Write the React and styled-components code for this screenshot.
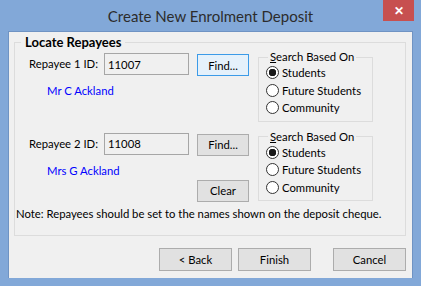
import styled, { createGlobalStyle } from "styled-components";

const GlobalStyle = createGlobalStyle`
  body {
    margin: 0;
    background: #ffffff;
    font-family: Lato, "Noto Sans", sans-serif;
  }
`;

const Window = styled.div`
  width: 421px;
  height: 286px;
  box-sizing: border-box;
  background: #82a8d8;
  padding: 0 8px 8px 8px;
  display: flex;
  flex-direction: column;
`;

const TitleBar = styled.div`
  height: 31px;
  display: grid;
  grid-template-columns: 1fr auto 1fr;
  align-items: center;
`;

const Title = styled.div`
  grid-column: 2;
  font-size: 15px;
  color: #2c2c2c;
  padding-top: 1px;
`;

const CloseButton = styled.div`
  grid-column: 3;
  justify-self: end;
  align-self: start;
  width: 31px;
  height: 21px;
  margin-right: -1px;
  background: #c75050;
  color: #ffffff;
  font-size: 12px;
  font-weight: bold;
  display: flex;
  align-items: center;
  justify-content: center;
`;

const Client = styled.div`
  flex: 1;
  background: #f0f0f0;
  box-sizing: border-box;
  border: 1px solid #6f93c3;
  border-bottom: none;
  padding-top: 3px;
  display: flex;
  flex-direction: column;
  font-size: 11.3px;
  color: #000000;
  white-space: nowrap;
`;

const GroupBox = styled.fieldset`
  margin: 0 6px 0 5px;
  padding: 0 0 14px 0;
  border: 1px solid #dcdcdc;
  min-inline-size: 0;
`;

const GroupTitle = styled.legend`
  margin-left: 6px;
  padding: 0 4px;
  font-weight: bold;
  font-size: 13px;
  line-height: 14px;
`;

const Block = styled.div`
  display: flex;
  align-items: flex-start;
  margin-top: ${(p) => p.$top}px;
`;

const LeftCol = styled.div`
  display: flex;
  flex-direction: column;
  padding-left: 14px;
  width: 160px;
`;

const FieldRow = styled.div`
  display: flex;
  align-items: center;
`;

const Label = styled.span`
  width: 75px;
  line-height: 14px;
`;

const IdInput = styled.input`
  width: 85px;
  height: 22px;
  box-sizing: border-box;
  border: 1px solid #a6a6a6;
  background: #f0f0f0;
  font-family: inherit;
  font-size: 11.3px;
  color: #000000;
  padding: 0 3px;
  outline: none;
`;

const PersonName = styled.span`
  margin: 9px 0 0 18px;
  line-height: 14px;
  color: #0000ff;
`;

const ButtonCol = styled.div`
  display: flex;
  flex-direction: column;
  margin: 1px 0 0 8px;
  gap: 24px;
`;

const Button = styled.button`
  width: ${(p) => p.$w || 52}px;
  height: ${(p) => p.$h || 22}px;
  box-sizing: border-box;
  border: 1px solid ${(p) => (p.$focus ? "#3c9be8" : "#acacac")};
  background: ${(p) => (p.$focus ? "#e5f1fb" : "#e1e1e1")};
  font-family: inherit;
  font-size: 11.3px;
  color: #000000;
  padding: 0;
`;

const SearchBox = styled.fieldset`
  margin: -3px 0 0 9px;
  padding: 0 0 4px 7px;
  width: 115px;
  box-sizing: border-box;
  border: 1px solid #dcdcdc;
  min-inline-size: 0;
`;

const SearchTitle = styled.legend`
  margin-left: 2px;
  padding: 0 2px;
  line-height: 14px;
`;

const RadioRow = styled.label`
  display: flex;
  align-items: center;
  height: 17.5px;
  gap: 3px;
`;

const Radio = styled.input`
  appearance: none;
  margin: 0;
  width: 13px;
  height: 13px;
  box-sizing: border-box;
  border: 1px solid #333333;
  border-radius: 50%;
  background: #ffffff;
  &:checked {
    background: radial-gradient(circle, #1a1a1a 0 3.5px, #ffffff 4px);
  }
`;

const Note = styled.div`
  margin: 5px 0 0 1px;
  line-height: 14px;
`;

const Footer = styled.div`
  display: flex;
  justify-content: flex-end;
  margin: 12px 6px 0 0;
`;

const Spacer = styled.div`
  width: ${(p) => p.$w}px;
`;

const SearchOptions = ({ name }) => (
  <SearchBox>
    <SearchTitle>
      <u>S</u>earch Based On
    </SearchTitle>
    <RadioRow>
      <Radio type="radio" name={name} defaultChecked />
      Students
    </RadioRow>
    <RadioRow>
      <Radio type="radio" name={name} />
      Future Students
    </RadioRow>
    <RadioRow>
      <Radio type="radio" name={name} />
      Community
    </RadioRow>
  </SearchBox>
);

const App = () => {
  return (
    <>
      <GlobalStyle />
      <Window>
        <TitleBar>
          <Title>Create New Enrolment Deposit</Title>
          <CloseButton>✕</CloseButton>
        </TitleBar>
        <Client>
          <GroupBox>
            <GroupTitle>Locate Repayees</GroupTitle>
            <Block $top={4}>
              <LeftCol>
                <FieldRow>
                  <Label>Repayee 1 ID:</Label>
                  <IdInput defaultValue="11007" readOnly />
                </FieldRow>
                <PersonName>Mr C Ackland</PersonName>
              </LeftCol>
              <ButtonCol>
                <Button $focus>Find...</Button>
              </ButtonCol>
              <SearchOptions name="search1" />
            </Block>
            <Block $top={11}>
              <LeftCol>
                <FieldRow>
                  <Label>Repayee 2 ID:</Label>
                  <IdInput defaultValue="11008" readOnly />
                </FieldRow>
                <PersonName>Mrs G Ackland</PersonName>
              </LeftCol>
              <ButtonCol>
                <Button>Find...</Button>
                <Button>Clear</Button>
              </ButtonCol>
              <SearchOptions name="search2" />
            </Block>
            <Note>
              Note: Repayees should be set to the names shown on the deposit
              cheque.
            </Note>
          </GroupBox>
          <Footer>
            <Button $w={73} $h={23}>
              &lt; Back
            </Button>
            <Spacer $w={6} />
            <Button $w={73} $h={23}>
              Finish
            </Button>
            <Spacer $w={22} />
            <Button $w={73} $h={23}>
              Cancel
            </Button>
          </Footer>
        </Client>
      </Window>
    </>
  );
};

export default App;
